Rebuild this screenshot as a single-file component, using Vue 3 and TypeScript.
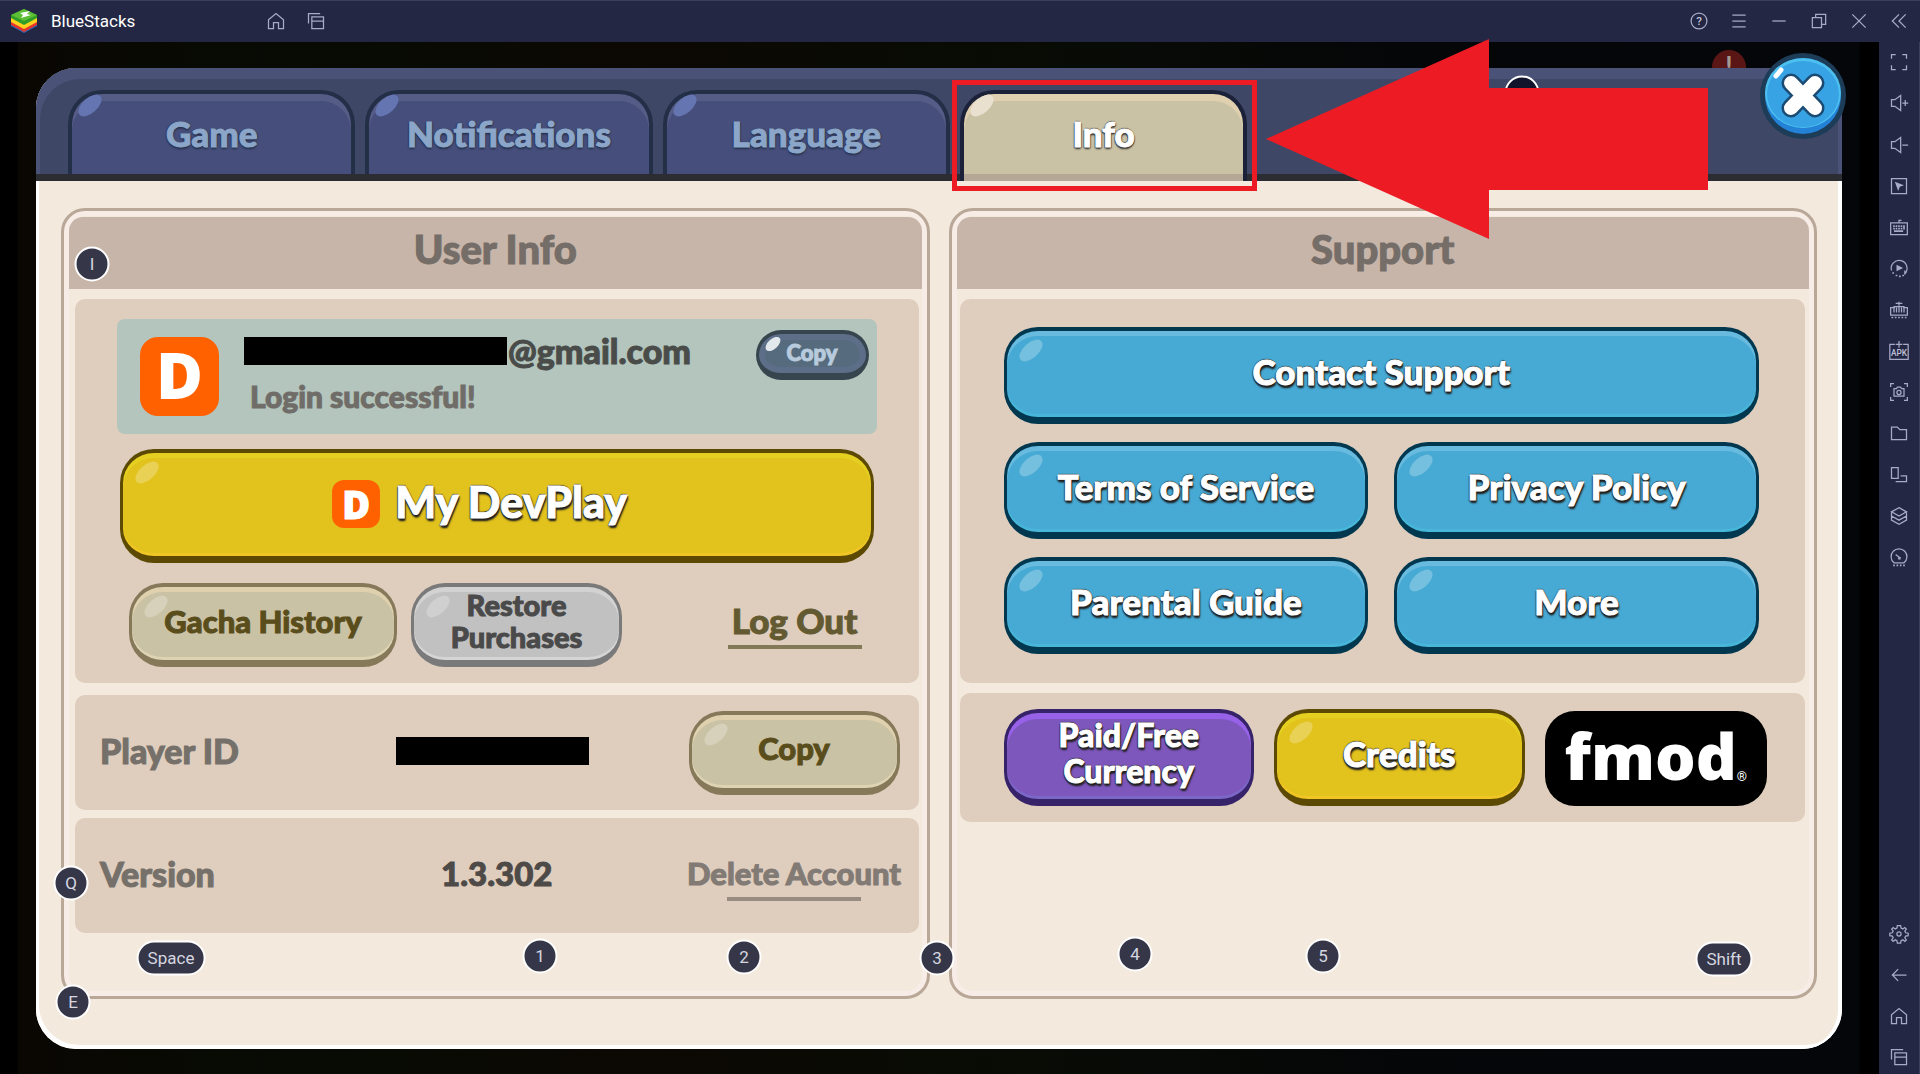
<script setup lang="ts">
interface Icon {
  name: string
  d?: string
  fill?: string
  text?: string
  textY?: number
  textSize?: number
}

interface KeyHint {
  label: string
  x: number
  y: number
}

const home = 'M3 10.5 12 3l9 7.5V21h-6v-7H9v7H3z'
const recents = 'M3 15V3h14M7 7h14v14H7zM7 12h14'

const windowIcons: Icon[] = [
  { name: 'Help', d: 'M12 2.5a9.5 9.5 0 1 0 0 19a9.5 9.5 0 1 0 0-19z', text: '?', textY: 17, textSize: 14 },
  { name: 'Menu', d: 'M4 5h16M4 12h16M4 19h16' },
  { name: 'Minimize', d: 'M4 12h16' },
  { name: 'Restore', d: 'M4 8h11v12H4zM8 8V4h12v12h-5' },
  { name: 'Close window', d: 'M4 4l16 16M20 4 4 20' },
  { name: 'Collapse sidebar', d: 'M12 4l-8 8 8 8M20 4l-8 8 8 8' },
]

const toolIcons: Icon[] = [
  { name: 'Full screen', d: 'M3 8V3h5M16 3h5v5M21 16v5h-5M8 21H3v-5' },
  { name: 'Volume up', d: 'M3 8h4l7-5v18l-7-5H3zM16 12h7M19.500 8.500v7' },
  { name: 'Volume down', d: 'M3 8h4l7-5v18l-7-5H3zM16 12h7' },
  { name: 'Lock cursor', d: 'M3 3h18v18H3z', fill: 'M7 7l11 4-5 2-2 5z' },
  {
    name: 'Controls',
    d: 'M2 7h20v14H2zM12 7V4h3',
    fill: 'M5 10h2v2H5zM8 10h2v2H8zM11 10h2v2h-2zM14 10h2v2h-2zM17 10h2v5h-2zM5 13h2v2H5zM8 13h2v2H8zM11 13h2v2h-2zM14 13h2v2h-2zM6 16h11v2H6z',
  },
  {
    name: 'Sync operations',
    d: 'M3 15A9.500 9.500 0 1 1 19 19M19 15v5',
    fill: 'M9 8l8 4-8 4zM4 17h2v2H4zM8 20h2v2H8zM12 21h2v2h-2zM16 20h2v2h-2z',
  },
  {
    name: 'Macro recorder',
    d: 'M7 9H2v9h20V9h-5M12 2v5M8 4h8M6 15V8h12v7M9 9v6M12 8v7M15 9v6',
    fill: 'M3 20h2v2H3zM7 20h2v2H7zM11 20h2v2h-2zM15 20h2v2h-2zM19 20h2v2h-2z',
  },
  { name: 'Install APK', d: 'M7 4H1v18h22V4h-6M12 0v8M8 4h8', text: 'APK', textY: 18, textSize: 10 },
  {
    name: 'Screenshot',
    d: 'M2 6V2h4M18 2h4v4M22 18v4h-4M6 22H2v-4M6 8h3l1-2h4l1 2h3v9H6zM12 10a2.500 2.500 0 1 0 0 5a2.500 2.500 0 1 0 0-5z',
  },
  { name: 'Media folder', d: 'M3 5h7l3 3h8v12H3z' },
  { name: 'Rotate', d: 'M3 3h8v13H3zM14 13h7v7H8' },
  { name: 'Instances', d: 'M12 2l9 5-9 5-9-5zM3 7v10l9 5 9-5V7M3 12l9 5 9-5' },
  {
    name: 'Trim memory',
    d: 'M6 19a9.500 9.500 0 1 1 12 0zM8 9l5 4',
    fill: 'M11 12h3v3h-3zM5 21h2v2H5zM9 21h2v2H9zM13 21h2v2h-2zM17 21h2v2h-2z',
  },
]

const navIcons: Icon[] = [
  {
    name: 'Settings',
    d: 'M10 2h4l.5 3 2 .9L19 4.200 20.800 6 19 8.500l1 2 3 .5v3l-3 .5-1 2 1.800 2.500-1.800 1.800-2.500-1.800-2 .9-.5 3h-4l-.5-3-2-.9L5 20.800 3.200 19 5 16.500l-1-2-3-.5v-3l3-.5 1-2L3.200 6 5 4.200l2.500 1.700 2-.9zM12 9.500a2.500 2.500 0 1 0 0 5a2.500 2.500 0 1 0 0-5z',
  },
  { name: 'Back', d: 'M21 12H4M11 5l-7 7 7 7' },
  { name: 'Home', d: home },
  { name: 'Recent apps', d: recents },
]

const tabs = ['Game', 'Notifications', 'Language', 'Info']
const activeTab = 'Info'

const supportButtons = ['Contact Support', 'Terms of Service', 'Privacy Policy', 'Parental Guide', 'More']

const keyHints: KeyHint[] = [
  { label: 'I', x: 92, y: 222 },
  { label: 'Q', x: 71, y: 841 },
  { label: 'E', x: 73, y: 960 },
  { label: 'Space', x: 171, y: 916 },
  { label: '1', x: 540, y: 914 },
  { label: '2', x: 744, y: 915 },
  { label: '3', x: 937, y: 916 },
  { label: '4', x: 1135, y: 912 },
  { label: '5', x: 1323, y: 914 },
  { label: 'Shift', x: 1724, y: 917 },
]
</script>

<template>
  <div class="app">
    <header class="titlebar">
      <svg class="logo" viewBox="0 0 26 24" aria-hidden="true">
        <path fill="#1f6fc4" d="M0 15l13 7 13-7v2l-13 7-13-7z" />
        <path fill="#e5342b" d="M0 12l13 7 13-7v4l-13 7-13-7z" />
        <path fill="#ffd21f" d="M0 8l13 7 13-7v5l-13 7-13-7z" />
        <path fill="#2f9d26" d="M0 6 13 0l13 6v3l-13 7L0 9z" />
        <path fill="#5cbf35" d="M0 6 13 0l13 6-13 6z" />
        <path fill="#fff" d="M9 4l10-2-3 3 4 1-10 3 2-3z" />
      </svg>
      <span class="brand">BlueStacks</span>
      <nav class="shortcuts">
        <button class="icon-btn" type="button" aria-label="Home">
          <svg viewBox="0 0 24 24"><path :d="home" /></svg>
        </button>
        <button class="icon-btn" type="button" aria-label="Recent apps">
          <svg viewBox="0 0 24 24"><path :d="recents" /></svg>
        </button>
      </nav>
      <div class="window-actions">
        <button v-for="icon in windowIcons" :key="icon.name" class="icon-btn" type="button" :aria-label="icon.name">
          <svg viewBox="0 0 24 24">
            <path :d="icon.d" />
            <text v-if="icon.text" x="12" :y="icon.textY" :font-size="icon.textSize">{{ icon.text }}</text>
          </svg>
        </button>
      </div>
    </header>

    <div class="body">
      <main class="stage">
        <span class="alert">!</span>
        <section class="dialog">
          <nav class="tabs">
            <button
              v-for="tab in tabs"
              :key="tab"
              type="button"
              class="tab"
              :class="{ active: tab === activeTab }"
            >
              {{ tab }}
            </button>
          </nav>

          <div class="panels">
            <section class="panel user">
              <h2 class="panel-title">User Info</h2>
              <div class="card account">
                <div class="login">
                  <span class="dev-logo large">D</span>
                  <div class="login-text">
                    <div class="mail"><span class="redacted mail-bar"></span>@gmail.com</div>
                    <div class="status">Login successful!</div>
                  </div>
                  <button type="button" class="btn slate">Copy</button>
                </div>
                <button type="button" class="btn yellow outlined devplay">
                  <span class="dev-logo small">D</span>
                  My DevPlay
                </button>
                <div class="account-row">
                  <button type="button" class="btn khaki gacha">Gacha History</button>
                  <button type="button" class="btn gray restore">Restore<br />Purchases</button>
                  <a class="text-link logout" href="#">Log Out</a>
                </div>
              </div>
              <div class="card info-row player">
                <span class="label">Player ID</span>
                <span class="redacted id-bar"></span>
                <button type="button" class="btn khaki copy">Copy</button>
              </div>
              <div class="card info-row">
                <span class="label">Version</span>
                <span class="version">1.3.302</span>
                <a class="text-link delete" href="#">Delete Account</a>
              </div>
            </section>

            <section class="panel help">
              <h2 class="panel-title">Support</h2>
              <div class="card support">
                <button v-for="name in supportButtons" :key="name" type="button" class="btn blue outlined">
                  {{ name }}
                </button>
              </div>
              <div class="card legal">
                <button type="button" class="btn purple outlined">Paid/Free<br />Currency</button>
                <button type="button" class="btn yellow outlined">Credits</button>
                <div class="fmod"><span class="fmod-name">fmod</span><span class="fmod-mark">®</span></div>
              </div>
            </section>
          </div>
        </section>

        <span class="key hidden-key"></span>
        <button type="button" class="close" aria-label="Close">
          <svg viewBox="0 0 86 86">
            <circle cx="43" cy="43" r="43" fill="#1d3c58" />
            <circle cx="43" cy="43" r="38" fill="#2381d6" />
            <ellipse cx="43" cy="40" rx="38" ry="35" fill="#4cc0ef" />
            <ellipse cx="43" cy="41" rx="36" ry="33" fill="#37a3e5" />
            <path d="M31 30l24 25M55 30 31 55" stroke="#1b4b73" stroke-width="19" stroke-linecap="round" />
            <path d="M31 30l24 25M55 30 31 55" stroke="#fff" stroke-width="14" stroke-linecap="round" />
            <path d="M16 23l5-6" stroke="#fff" stroke-width="5" stroke-linecap="round" />
          </svg>
        </button>

        <span
          v-for="hint in keyHints"
          :key="hint.label"
          class="key"
          :style="{ left: hint.x + 'px', top: hint.y + 'px' }"
        >{{ hint.label }}</span>

        <span class="highlight"></span>
        <svg class="arrow" viewBox="0 0 442 200" aria-hidden="true">
          <path fill="#ed1c24" d="M0 100 223 0v49h219v102H223v49z" />
        </svg>
      </main>

      <aside class="sidebar">
        <div class="tools">
          <button v-for="icon in toolIcons" :key="icon.name" class="icon-btn" type="button" :aria-label="icon.name">
            <svg viewBox="0 0 24 24">
              <path :d="icon.d" />
              <path v-if="icon.fill" class="solid" :d="icon.fill" />
              <text v-if="icon.text" x="12" :y="icon.textY" :font-size="icon.textSize">{{ icon.text }}</text>
            </svg>
          </button>
        </div>
        <div class="nav">
          <button v-for="icon in navIcons" :key="icon.name" class="icon-btn" type="button" :aria-label="icon.name">
            <svg viewBox="0 0 24 24"><path :d="icon.d" /></svg>
          </button>
        </div>
      </aside>
    </div>
  </div>
</template>

<style>
body {
  margin: 0;
  background: #000;
}
</style>

<style scoped>
.app {
  display: flex;
  flex-direction: column;
  min-height: 100vh;
  font-family: Lato, "Noto Sans", sans-serif;
  font-weight: 900;
}

.app *,
.app *::before {
  box-sizing: border-box;
}

button {
  font: inherit;
  margin: 0;
  cursor: pointer;
}

.tab,
.btn,
.panel-title,
.mail,
.status,
.label,
.version,
.text-link {
  -webkit-text-stroke: 1px currentColor;
}

/* Title bar */
.titlebar {
  display: flex;
  align-items: center;
  height: 42px;
  padding: 0 9px 2px 11px;
  background: #232743;
  border-top: 1px solid #3a3f60;
}

.logo {
  width: 26px;
  height: 24px;
}

.brand {
  margin-left: 14px;
  width: 210px;
  color: #fff;
  font: 400 17px/24px Roboto, sans-serif;
}

.shortcuts {
  display: flex;
  gap: 16px;
  margin-left: 3px;
}

.window-actions {
  display: flex;
  gap: 16px;
  margin-left: auto;
}

.icon-btn {
  width: 24px;
  height: 24px;
  padding: 2px;
  border: 0;
  background: none;
}

.icon-btn svg {
  display: block;
  width: 100%;
  height: 100%;
  overflow: visible;
}

.icon-btn path {
  fill: none;
  stroke: #a8abc8;
  stroke-width: 1.5;
}

.icon-btn .solid {
  fill: #a8abc8;
  stroke: none;
}

.icon-btn text {
  fill: #c0c2d8;
  font-family: Roboto, sans-serif;
  font-weight: 500;
  text-anchor: middle;
}

/* Body */
.body {
  display: flex;
  flex: 1;
}

.stage {
  position: relative;
  display: flex;
  flex: 1;
  padding: 26px 37px 25px 36px;
  background: linear-gradient(90deg, #000 17px, #0a0703 18px, #070b04 16%, #0c0804 34%, #080c05 55%, #050608 75%, #040609 1859px, #000 1860px);
}

.alert {
  position: absolute;
  top: 8px;
  right: 133px;
  width: 34px;
  height: 34px;
  border-radius: 50%;
  background: #5a1614;
  color: #a49a94;
  font-size: 24px;
  line-height: 30px;
  text-align: center;
}

.sidebar {
  display: flex;
  flex-direction: column;
  justify-content: space-between;
  width: 41px;
  padding: 8px 8px 5px;
  background: #232743;
  border-right: 1px solid #3a3f60;
}

.tools {
  display: flex;
  flex-direction: column;
  justify-content: space-between;
  height: 519px;
}

.nav {
  display: flex;
  flex-direction: column;
  gap: 17px;
}

/* Dialog */
.dialog {
  position: relative;
  display: flex;
  flex: 1;
  flex-direction: column;
  border-radius: 40px;
  background: #f3e9dd;
  box-shadow: inset 3px -4px 0 #fff, inset -4px 0 0 #fff;
}

.tabs {
  display: grid;
  grid-template-columns: repeat(4, 1fr) 2fr;
  gap: 10px;
  height: 113px;
  padding: 22px 10px 0 32px;
  border-bottom: 7px solid #2b2d33;
  border-radius: 40px 40px 0 0;
  background: #3e4866;
  box-shadow: inset 4px 11px 0 #4a5277, inset -4px 0 0 #4a5277;
}

.tab {
  position: relative;
  height: 84px;
  padding: 0 0 2px;
  border: 4px solid #232e47;
  border-bottom: 0;
  border-radius: 34px 34px 0 0;
  background: #464e7b;
  box-shadow: inset 0 7px 0 #555c86;
  color: #8ba6c8;
  font-size: 35px;
  line-height: 42px;
  text-shadow: 0 2px 2px #232e47, 1px 0 1px #232e47, -1px 0 1px #232e47;
}

.tab::before,
.btn::before {
  content: "";
  position: absolute;
  top: 4px;
  left: 4px;
  width: 28px;
  height: 15px;
  border-radius: 50%;
  background: #6575b2;
  transform: rotate(-42deg);
}

.tab.active {
  height: 91px;
  padding-bottom: 9px;
  border-color: #1b2138;
  background: linear-gradient(#cac2a5 80px, #b5a795 80px);
  box-shadow: inset 0 7px 0 #e0d0b0;
  color: #fff;
  text-shadow: 0 2px 2px #333, 1px 1px 1px #333, -1px 1px 1px #333, 0 -1px 1px #333;
}

.tab.active::before {
  background: #e9e0d0;
}

.panels {
  display: grid;
  grid-template-columns: 1fr 1fr;
  gap: 19px;
  flex: 1;
  padding: 27px 25px 50px;
}

.panel {
  padding: 6px 5px;
  border: 3px solid #b9a798;
  border-radius: 24px;
  box-shadow: inset 0 0 0 5px #f8ece6;
}

.panel-title {
  margin: 0 0 10px;
  height: 72px;
  border-radius: 14px 14px 0 0;
  background: #c7b5a9;
  color: #756d68;
  font-size: 40px;
  font-weight: 900;
  line-height: 64px;
  text-align: center;
}

.card {
  margin-bottom: 10px;
  border-radius: 10px;
  background: #dfcebe;
}

.user .card {
  margin-left: 6px;
  margin-right: 3px;
}

.help .card {
  margin-left: 3px;
  margin-right: 4px;
}

/* Glossy buttons */
.btn {
  position: relative;
  padding: 0 0 6px;
  border-style: solid;
  border-width: 4px 3px 7px;
  border-radius: 34px;
  font-size: 35px;
  line-height: 42px;
}

.btn::before {
  top: 12px;
  left: 10px;
  background: rgba(255, 255, 255, 0.25);
}

.outlined {
  color: #fff;
  text-shadow: 0 2px 2px #222, 1px 1px 1px #222, -1px 1px 1px #222, 0 -1px 1px #222, 1px 3px 2px #222;
}

.blue {
  border-color: #02384f;
  background: #47aad4;
  box-shadow: inset 0 5px 0 #68bade, inset 0 -3px 0 #47b6d8;
}

.yellow {
  border-color: #5c4a04;
  background: #e2c21c;
  box-shadow: inset 0 5px 0 #e5d021, inset 0 -3px 0 #f0c626;
}

.purple {
  border-color: #36236a;
  background: #7e57bd;
  box-shadow: inset 0 6px 0 #9762e8, inset 0 -3px 0 #7a67c6;
  font-size: 32px;
  line-height: 36px;
}

.purple::before {
  display: none;
}

.khaki {
  border-color: #857959;
  background: #cac2a5;
  box-shadow: inset 0 5px 0 #dfd0ae, inset 0 -3px 0 #ded4b3;
  color: #5a4d1c;
  font-size: 31px;
}

.gray {
  border-color: #7a7a7a;
  background: #c1c1c1;
  box-shadow: inset 0 5px 0 #d2d2d2, inset 0 -3px 0 #d5d5d5;
  color: #4a4a4a;
  font-size: 29px;
  line-height: 32px;
}

.slate {
  padding-bottom: 2px;
  border-color: #37454e;
  background: #566b7e;
  box-shadow: inset 0 0 0 6px #5d6f88;
  color: #b8cbdd;
  font-size: 22px;
  line-height: 26px;
}

.slate::before {
  top: 5px;
  left: 5px;
  width: 18px;
  height: 10px;
  background: #e3e8ec;
}

/* User info */
.account {
  padding: 20px 42px 16px;
}

.user .account {
  margin-bottom: 12px;
}

.login {
  display: flex;
  height: 115px;
  padding: 11px 8px 0 23px;
  border-radius: 8px;
  background: #b3c5bc;
}

.dev-logo {
  display: flex;
  align-items: center;
  justify-content: center;
  background: #ff6000;
  color: #fff;
  font-family: "Open Sans", sans-serif;
  font-weight: 800;
  text-shadow: none;
}

.dev-logo.large {
  width: 79px;
  height: 79px;
  margin-top: 7px;
  border-radius: 18px;
  font-size: 64px;
  line-height: 72px;
  padding-bottom: 4px;
}

.dev-logo.small {
  width: 48px;
  height: 48px;
  margin-top: 4px;
  border-radius: 12px;
  font-size: 38px;
}

.login-text {
  margin: 1px auto 0 25px;
}

.mail {
  display: flex;
  align-items: center;
  gap: 1px;
  height: 40px;
  color: #4a4c4a;
  font-size: 34px;
  line-height: 40px;
}

.redacted {
  height: 28px;
  background: #000;
}

.mail-bar {
  width: 263px;
}

.status {
  margin: 6px 0 0 6px;
  color: #706d69;
  font-size: 30px;
  line-height: 38px;
}

.login .btn {
  width: 113px;
  height: 50px;
}

.devplay {
  display: flex;
  align-items: center;
  justify-content: center;
  gap: 15px;
  width: calc(100% - 6px);
  height: 114px;
  margin: 15px 3px 20px;
  padding-right: 34px;
  font-size: 43px;
  line-height: 52px;
}

.account-row {
  display: flex;
  gap: 14px;
  height: 84px;
  padding: 0 15px 0 12px;
}

.gacha {
  flex: 0 1 268px;
}

.restore {
  flex: 0 1 211px;
}

.text-link {
  display: flex;
  flex-direction: column;
  align-items: center;
  text-decoration: none;
  white-space: nowrap;
}

.text-link::after {
  content: "";
  width: 134px;
  height: 4px;
}

.logout {
  margin: 16px 0 0 auto;
  color: #645a32;
  font-size: 35px;
  line-height: 42px;
}

.logout::after {
  margin-top: 4px;
  background: #827956;
}

.delete {
  padding-top: 2px;
  color: #827a74;
  font-size: 31px;
  line-height: 40px;
}

.delete::after {
  margin-top: 4px;
  background: #978c82;
}

.info-row {
  display: grid;
  grid-template-columns: 209px 1fr 219px;
  align-items: center;
  justify-items: center;
  height: 115px;
  padding: 0 15px 0 25px;
}

.user .info-row {
  margin-bottom: 8px;
}

.label {
  justify-self: start;
  padding-bottom: 4px;
  color: #76706a;
  font-size: 34px;
  line-height: 42px;
}

.id-bar {
  width: 193px;
  margin: 0 9px 4px 0;
}

.copy {
  width: 211px;
  height: 84px;
}

.version {
  padding-bottom: 6px;
  color: #4d4a47;
  font-size: 33px;
  line-height: 42px;
}

/* Support */
.support {
  display: grid;
  grid-template-columns: 1fr 1fr;
  grid-auto-rows: 97px;
  gap: 18px 26px;
  padding: 28px 46px 29px 44px;
}

.support .btn:first-child {
  grid-column: 1 / -1;
}

.legal {
  display: grid;
  grid-template-columns: 250fr 250fr 222fr;
  gap: 20px;
  height: 129px;
  padding: 16px 38px 16px 44px;
}

.fmod {
  display: flex;
  align-items: flex-end;
  justify-content: center;
  margin-top: 2px;
  padding-bottom: 20px;
  border-radius: 30px;
  background: #000;
  color: #fff;
}

.fmod-name {
  font-family: "Open Sans", sans-serif;
  font-size: 64px;
  font-weight: 800;
  line-height: 60px;
}

.fmod-mark {
  font: 400 13px/18px Roboto, sans-serif;
}

/* Overlays */
.key {
  position: absolute;
  min-width: 35px;
  height: 35px;
  padding: 0 9px;
  border: 2px solid #fff;
  border-radius: 18px;
  background: #353647;
  color: #d6d6e0;
  font: 400 17px/30px Roboto, sans-serif;
  text-align: center;
  transform: translate(-50%, -50%);
}

.hidden-key {
  top: 51px;
  left: 1522px;
  background: #12142c;
}

.close {
  position: absolute;
  top: 11px;
  right: 33px;
  width: 86px;
  height: 86px;
  padding: 0;
  border: 0;
  border-radius: 50%;
  background: none;
}

.close svg {
  display: block;
}

.highlight {
  position: absolute;
  top: 38px;
  left: 952px;
  width: 305px;
  height: 111px;
  border: 5px solid #ed1c24;
}

.arrow {
  position: absolute;
  top: -3px;
  left: 1266px;
  width: 442px;
  height: 200px;
}
</style>
